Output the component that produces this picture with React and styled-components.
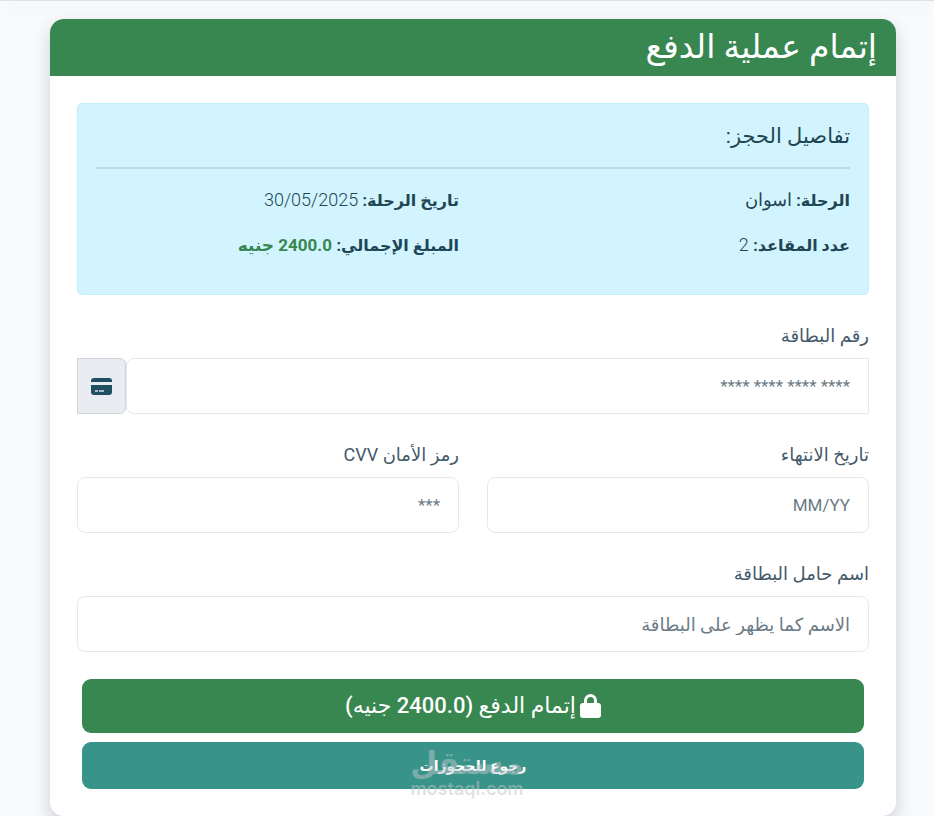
import React from "react";
import styled, { createGlobalStyle } from "styled-components";

const GlobalStyle = createGlobalStyle`
  * {
    box-sizing: border-box;
  }
  body {
    margin: 0;
    background: #f8fafc;
    color: #1f4654;
    font-family: Roboto, "DejaVu Sans", sans-serif;
    font-size: 18px;
    line-height: 28px;
  }
`;

const NavEdge = styled.div`
  height: 1px;
  background: #d9e4e4;
  box-shadow: 0 4px 16px rgba(30, 35, 50, 0.18);
`;

const Page = styled.main`
  padding: 18px 38px 0 50px;
`;

const Card = styled.section`
  background: #fff;
  border-radius: 14px;
  box-shadow: 0 8px 18px rgba(30, 35, 60, 0.2);
`;

const CardHeader = styled.header`
  padding: 8px 19px 9px;
  background: #388750;
  border-radius: 14px 14px 0 0;
  color: #fff;
`;

const CardTitle = styled.h1`
  margin: 0;
  font-size: 33px;
  font-weight: 500;
  line-height: 40px;
`;

const CardBody = styled.div`
  padding: 27px;
`;

const Details = styled.section`
  margin-bottom: 27px;
  padding: 18px;
  background: #d1f4fe;
  border: 1px solid #c3eefb;
  border-radius: 5px;
`;

const DetailsTitle = styled.h2`
  margin: 0;
  font-size: 21px;
  font-weight: 400;
  line-height: 28px;
`;

const Divider = styled.hr`
  height: 2px;
  margin: 17px 0;
  border: 0;
  background: #b9dbe6;
`;

const Columns = styled.div`
  display: grid;
  grid-template-columns: 1fr 1fr;
  column-gap: 28px;
`;

const Detail = styled.p`
  margin: 0 0 17px;
  font-weight: 300;
`;

const Term = styled.strong`
  font-size: 16px;
  font-weight: 700;
  line-height: 1;
`;

const Total = styled.strong`
  color: #388750;
  font-size: 17px;
  font-weight: 700;
  line-height: 1;
`;

const Field = styled.div`
  margin-bottom: 27px;
`;

const Label = styled.label`
  display: block;
  margin-bottom: 8px;
  color: #455a6a;
`;

const Input = styled.input`
  display: block;
  width: 100%;
  min-width: 0;
  height: 56px;
  padding: 0 18px;
  background: #fff;
  border: 1px solid #e6e8ee;
  border-radius: ${(props) => (props.$grouped ? "8px 0 0 8px" : "8px")};
  color: #1f4654;
  font: inherit;
  font-size: ${(props) => (props.$arabic ? "18px" : "17px")};
  &::placeholder {
    color: #6b7b86;
    opacity: 1;
  }
`;

const InputGroup = styled.div`
  display: flex;
`;

const Addon = styled.span`
  display: flex;
  flex: none;
  align-items: center;
  justify-content: center;
  width: 49px;
  background: #e9ecf0;
  border: 1px solid #cdd3d9;
  border-radius: 0 6px 6px 0;
`;

const Actions = styled.div`
  display: grid;
  gap: 9px;
  padding: 0 5px;
`;

const PayButton = styled.button`
  display: flex;
  align-items: center;
  justify-content: center;
  gap: 4px;
  height: 54px;
  border: 0;
  border-radius: 9px;
  background: #388750;
  color: #fff;
  font: inherit;
  font-size: 22px;
  font-weight: 500;
`;

const BackLink = styled.a`
  position: relative;
  display: flex;
  align-items: center;
  justify-content: center;
  height: 47px;
  border-radius: 9px;
  background: #389388;
  color: #fff;
  font-size: 14px;
  font-weight: 700;
  text-decoration: none;
`;

const Watermark = styled.span`
  position: absolute;
  top: 6px;
  left: 50%;
  width: 120px;
  margin-left: -66px;
  color: rgba(190, 198, 204, 0.5);
  text-align: center;
  pointer-events: none;
`;

const WatermarkName = styled.span`
  display: block;
  font-size: 31px;
  font-weight: 700;
  line-height: 32px;
`;

const WatermarkSite = styled.span`
  display: block;
  font-family: Inter, sans-serif;
  font-size: 18px;
  font-weight: 600;
  line-height: 18px;
`;

function CardIcon() {
  return (
    <svg width="22" height="18" viewBox="0 0 22 18" aria-hidden="true">
      <path d="M3 1h15a3 3 0 0 1 3 3v1H0V4a3 3 0 0 1 3-3z" fill="#1f4f60" />
      <path d="M0 8h21v7a3 3 0 0 1-3 3H3a3 3 0 0 1-3-3z" fill="#1f4f60" />
      <path d="M4 14h3M8 14h5" stroke="#d5dde2" strokeWidth="1.500" />
    </svg>
  );
}

function LockIcon() {
  return (
    <svg width="21" height="24" viewBox="0 0 21 24" aria-hidden="true">
      <path d="M5.500 11V6.500a5 5 0 0 1 10 0V11" fill="none" stroke="#fff" strokeWidth="3" />
      <rect y="9" width="21" height="15" rx="3" fill="#fff" />
    </svg>
  );
}

function App() {
  return (
    <div dir="rtl" lang="ar">
      <GlobalStyle />
      <NavEdge />
      <Page>
        <Card>
          <CardHeader>
            <CardTitle>إتمام عملية الدفع</CardTitle>
          </CardHeader>
          <CardBody>
            <Details>
              <DetailsTitle>تفاصيل الحجز:</DetailsTitle>
              <Divider />
              <Columns>
                <Detail>
                  <Term>الرحلة:</Term> اسوان
                </Detail>
                <Detail>
                  <Term>تاريخ الرحلة:</Term> <bdi>30/05/2025</bdi>
                </Detail>
                <Detail>
                  <Term>عدد المقاعد:</Term> 2
                </Detail>
                <Detail>
                  <Term>المبلغ الإجمالي:</Term> <Total>2400.0 جنيه</Total>
                </Detail>
              </Columns>
            </Details>
            <form>
              <Field>
                <Label htmlFor="card-number">رقم البطاقة</Label>
                <InputGroup>
                  <Input id="card-number" placeholder="**** **** **** ****" $grouped />
                  <Addon>
                    <CardIcon />
                  </Addon>
                </InputGroup>
              </Field>
              <Columns>
                <Field>
                  <Label htmlFor="expiry">تاريخ الانتهاء</Label>
                  <Input id="expiry" placeholder="MM/YY" />
                </Field>
                <Field>
                  <Label htmlFor="cvv">رمز الأمان CVV</Label>
                  <Input id="cvv" placeholder="***" />
                </Field>
              </Columns>
              <Field>
                <Label htmlFor="holder">اسم حامل البطاقة</Label>
                <Input id="holder" placeholder="الاسم كما يظهر على البطاقة" $arabic />
              </Field>
              <Actions>
                <PayButton type="button">
                  <LockIcon />
                  <span>إتمام الدفع (2400.0 جنيه)</span>
                </PayButton>
                <BackLink href="#bookings">
                  رجوع للحجوزات
                  <Watermark aria-hidden="true">
                    <WatermarkName>مستقل</WatermarkName>
                    <WatermarkSite>mostaql.com</WatermarkSite>
                  </Watermark>
                </BackLink>
              </Actions>
            </form>
          </CardBody>
        </Card>
      </Page>
    </div>
  );
}

export default App;
